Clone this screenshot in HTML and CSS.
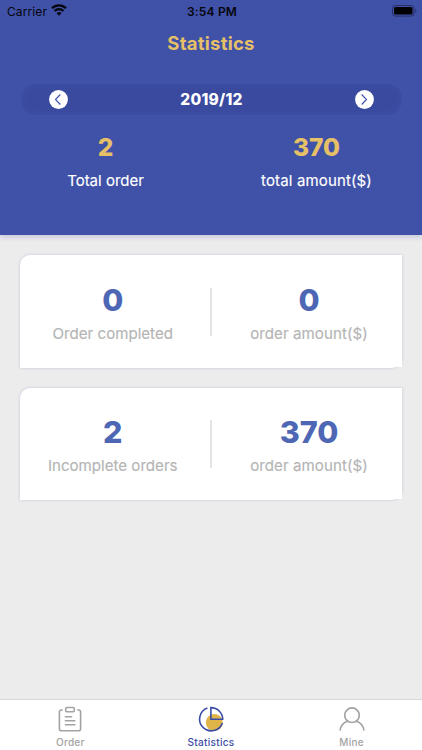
FILE: index.html
```html
<!DOCTYPE html>
<html lang="en">
<head>
<meta charset="utf-8">
<title>Statistics</title>
<link rel="stylesheet" href="styles.css">
</head>
<body>
<div class="screen">
  <header class="header">
    <div class="status">
      <div class="carrier"><span>Carrier</span>
        <svg width="16" height="12" viewBox="0 0 16 12"><g fill="none" stroke="#05060c" stroke-width="2.300"><path d="M1 4.200a10 10 0 0 1 14 0"/><path d="M3.500 7a6.400 6.400 0 0 1 9 0"/></g><path d="M8 11.800 5.500 9.300a3.600 3.600 0 0 1 5 0z" fill="#05060c"/></svg>
      </div>
      <div class="time">3:54 PM</div>
      <svg class="battery" width="25" height="12" viewBox="0 0 25 12"><rect x=".5" y=".5" width="21.500" height="10.600" rx="3" fill="none" stroke="#272f66"/><rect x="2" y="2" width="18.500" height="7.600" rx="1.600" fill="#000"/><path d="M23.400 4v3.800c1.400-.6 1.400-3.200 0-3.800z" fill="#272f66"/></svg>
    </div>
    <h1 class="title">Statistics</h1>
    <div class="month">
      <svg width="19" height="19" viewBox="0 0 19 19"><circle cx="9.500" cy="9.500" r="9.400" fill="#fff"/><path d="M11.300 4.500 6.500 9.500l4.800 5" fill="none" stroke="#3c4da6" stroke-width="1.100"/></svg>
      <span class="month-label">2019/12</span>
      <svg width="19" height="19" viewBox="0 0 19 19"><circle cx="9.500" cy="9.500" r="9.400" fill="#fff"/><path d="m6.700 4.500 4.800 5-4.800 5" fill="none" stroke="#3c4da6" stroke-width="1.100"/></svg>
    </div>
    <div class="totals">
      <div class="total"><strong>2</strong><span>Total order</span></div>
      <div class="total"><strong>370</strong><span class="total-amount">total amount($)</span></div>
    </div>
  </header>
  <main class="cards">
    <section class="card">
      <div class="cell"><strong>0</strong><span>Order completed</span></div>
      <div class="divider"></div>
      <div class="cell"><strong>0</strong><span class="amount">order amount($)</span></div>
    </section>
    <section class="card">
      <div class="cell"><strong>2</strong><span>Incomplete orders</span></div>
      <div class="divider"></div>
      <div class="cell"><strong>370</strong><span class="amount">order amount($)</span></div>
    </section>
  </main>
  <nav class="tabs">
    <div class="tab">
      <svg width="26" height="26" viewBox="0 0 26 26" fill="none" stroke="#a3a3a3" stroke-width="1.600"><path d="M5.700 4H4.400a2 2 0 0 0-2 2v16.700a2 2 0 0 0 2 2h17.200a2 2 0 0 0 2-2V6a2 2 0 0 0-2-2h-1.300"/><rect x="8.700" y="1.500" width="8.600" height="4.200" rx="1"/><path d="M7.800 10.800h7.400M7.800 14.800h10.600M7.800 18.800h10.600"/></svg>
      <span>Order</span>
    </div>
    <div class="tab active">
      <svg width="26" height="26" viewBox="0 0 26 26"><circle cx="16.300" cy="16.500" r="8.500" fill="#dfb449"/><g fill="none" stroke="#3c4da6" stroke-width="1.600"><path d="M9.400 2.100a11.700 11.700 0 1 0 15 14.800"/><path d="M12.900 1.600v11.700h11.800A11.800 11.800 0 0 0 12.900 1.600z"/></g></svg>
      <span>Statistics</span>
    </div>
    <div class="tab">
      <svg width="26" height="26" viewBox="0 0 26 26" fill="none" stroke="#a3a3a3" stroke-width="1.700"><circle cx="13" cy="9.200" r="7.300"/><path d="M1.100 24.500c.5-4.800 3.500-8 7.500-9.300M24.900 24.500c-.5-4.800-3.500-8-7.500-9.300"/></svg>
      <span>Mine</span>
    </div>
  </nav>
</div>
</body>
</html>
```
FILE: styles.css
```css
* { box-sizing: border-box; }
body { margin: 0; font-family: Inter, "Liberation Sans", sans-serif; }
svg { display: block; flex: none; }
.screen { width: 422px; height: 750px; display: flex; flex-direction: column; background: #ececec; overflow: hidden; }
.header { height: 235px; flex: none; background: #4051a8; box-shadow: 0 2px 5px rgba(64, 81, 168, .24); }
.status { height: 22px; display: grid; grid-template-columns: 1fr auto 1fr; align-items: center; padding: 0 5px 0 7px; color: #05060c; font-size: 12px; }
.carrier { display: flex; align-items: center; gap: 4px; letter-spacing: .1px; }
.carrier span { width: 40px; white-space: nowrap; }
.carrier svg { margin-top: -2px; }
.time { font-weight: 600; letter-spacing: .2px; }
.battery { justify-self: end; margin-top: -1px; }
.title { margin: 9px 0 0; height: 24px; line-height: 24px; text-align: center; font-size: 18.5px; font-weight: 700; letter-spacing: .25px; color: #e6c067; }
.month { margin: 29px 20px 0 21px; height: 31px; padding: 0 28px; border-radius: 16px; background: #3a4a9f; box-shadow: inset 0 0 8px rgba(64, 81, 168, .8); display: flex; align-items: center; justify-content: space-between; }
.month-label { color: #fff; font-size: 15.5px; font-weight: 800; letter-spacing: .25px; }
.totals { display: grid; grid-template-columns: 1fr 1fr; margin-top: 15px; }
.total { display: flex; flex-direction: column; align-items: center; }
.total strong { height: 34px; line-height: 34px; font-size: 24.5px; font-weight: 800; color: #e6c067; }
.total span { margin-top: 7px; line-height: 20px; font-size: 15px; color: #fff; -webkit-text-stroke: .15px #fff; }
.total .total-amount { letter-spacing: .14px; }
.cards { flex: 1; padding: 20px 20.5px 0 20px; display: flex; flex-direction: column; gap: 20px; }
.card { position: relative; width: 381.5px; height: 112.500px; padding-top: 26.500px; background: #fff; border-radius: 10px 0 10px 0; box-shadow: 0 0 3px rgba(64, 81, 168, .25); display: grid; grid-template-columns: 185.5px 11px 185px; }
.card::after { content: ""; position: absolute; right: 0; bottom: 1px; width: 10px; height: 10px; background: #fff; }
.cell { display: flex; flex-direction: column; align-items: center; }
.cell strong { height: 36px; line-height: 36px; font-size: 30.5px; font-weight: 800; color: #4e67b5; }
.cell span { margin-top: 5px; line-height: 21px; font-size: 15.1px; color: #b5b5b5; -webkit-text-stroke: .15px #b5b5b5; }
.cell .amount { letter-spacing: .06px; }
.divider { width: 1.5px; height: 48px; margin-top: 6px; justify-self: center; background: #e4e4e8; }
.tabs { height: 51px; flex: none; background: #fff; border-top: 1px solid #d8d8d8; display: grid; grid-template-columns: repeat(3, 1fr); }
.tab { padding-top: 6px; display: flex; flex-direction: column; align-items: center; color: #a3a3a3; }
.tab span { margin-top: 4px; font-size: 10px; line-height: 12px; font-weight: 500; letter-spacing: .3px; }
.tab.active { color: #3c4da6; }
```
